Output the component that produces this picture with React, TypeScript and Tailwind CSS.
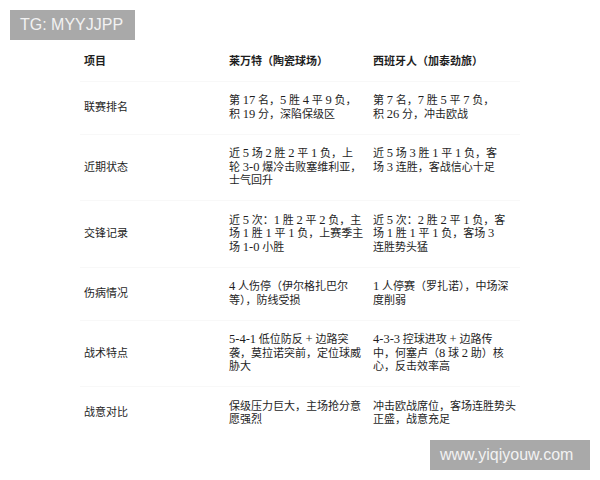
import React from 'react';

type Row = {
  label: string;
  home: string[];
  away: string[];
};

const rows: Row[] = [
  {
    label: '联赛排名',
    home: ['第 17 名，5 胜 4 平 9 负，', '积 19 分，深陷保级区'],
    away: ['第 7 名，7 胜 5 平 7 负，', '积 26 分，冲击欧战'],
  },
  {
    label: '近期状态',
    home: ['近 5 场 2 胜 2 平 1 负，上', '轮 3-0 爆冷击败塞维利亚，', '士气回升'],
    away: ['近 5 场 3 胜 1 平 1 负，客', '场 3 连胜，客战信心十足'],
  },
  {
    label: '交锋记录',
    home: ['近 5 次：1 胜 2 平 2 负，主', '场 1 胜 1 平 1 负，上赛季主', '场 1-0 小胜'],
    away: ['近 5 次：2 胜 2 平 1 负，客', '场 1 胜 1 平 1 负，客场 3', '连胜势头猛'],
  },
  {
    label: '伤病情况',
    home: ['4 人伤停（伊尔格扎巴尔', '等），防线受损'],
    away: ['1 人停赛（罗扎诺），中场深', '度削弱'],
  },
  {
    label: '战术特点',
    home: ['5-4-1 低位防反 + 边路突', '袭，莫拉诺突前，定位球威', '胁大'],
    away: ['4-3-3 控球进攻 + 边路传', '中，何塞卢（8 球 2 助）核', '心，反击效率高'],
  },
  {
    label: '战意对比',
    home: ['保级压力巨大，主场抢分意', '愿强烈'],
    away: ['冲击欧战席位，客场连胜势头', '正盛，战意充足'],
  },
];

const sans = "font-['Liberation_Sans','Noto_Sans_CJK_SC',sans-serif]";
const serif = "font-['Liberation_Serif','Noto_Sans_CJK_SC',serif]";

// digits and +/- in the source render in a larger Times-like face
const Line = ({ text }: { text: string }) => {
  const parts = text.split(/([0-9+\-]+)/);
  return (
    <div className="whitespace-nowrap">
      {parts.map((p, i) =>
        /^[0-9+\-]+$/.test(p) ? (
          <span key={i} className="text-[12.5px]">
            {p}
          </span>
        ) : (
          <span key={i}>{p}</span>
        ),
      )}
    </div>
  );
};

const Lines = ({ lines }: { lines: string[] }) => (
  <div className={`${serif} text-[11px] leading-[13.5px] text-[#1e1e1e]`}>
    {lines.map((l, i) => (
      <Line key={i} text={l} />
    ))}
  </div>
);

const App = () => {
  return (
    <div className="relative w-[600px] h-[480px] bg-white overflow-hidden">
      <div className="pt-[42px] pl-[80px]">
        <div className="w-[440px]">
          <div className="grid grid-cols-[145px_144px_151px] border-b border-[#f8f8f8] py-[12.5px]">
            <div className={`${sans} pl-1 text-[11px] leading-[13.5px] font-bold text-[#1e1e1e]`}>项目</div>
            <div className={`${sans} pl-1 text-[11px] leading-[13.5px] font-bold text-[#1e1e1e]`}>莱万特（陶瓷球场）</div>
            <div className={`${sans} pl-1 text-[11px] leading-[13.5px] font-bold text-[#1e1e1e]`}>西班牙人（加泰劲旅）</div>
          </div>
          {rows.map((r) => (
            <div
              key={r.label}
              className="grid grid-cols-[145px_144px_151px] border-b border-[#f8f8f8] last:border-b-0 py-[12.5px] items-center"
            >
              <div className={`${sans} pl-1 text-[11px] leading-[13.5px] text-[#1e1e1e]`}>{r.label}</div>
              <div className="pl-1 self-start">
                <Lines lines={r.home} />
              </div>
              <div className="pl-1 self-start">
                <Lines lines={r.away} />
              </div>
            </div>
          ))}
        </div>
      </div>

      <div
        className={`absolute left-[10px] top-[10px] w-[125px] h-[30px] bg-[#a9a9a9] text-[#f2f2f2] text-[16px] leading-[30px] pl-[10px] ${sans}`}
      >
        TG: MYYJJPP
      </div>
      <div
        className={`absolute left-[430px] top-[440px] w-[160px] h-[30px] bg-[#a9a9a9] text-[#f2f2f2] text-[16px] leading-[30px] pl-[10px] ${sans}`}
      >
        www.yiqiyouw.com
      </div>
    </div>
  );
};

export default App;
